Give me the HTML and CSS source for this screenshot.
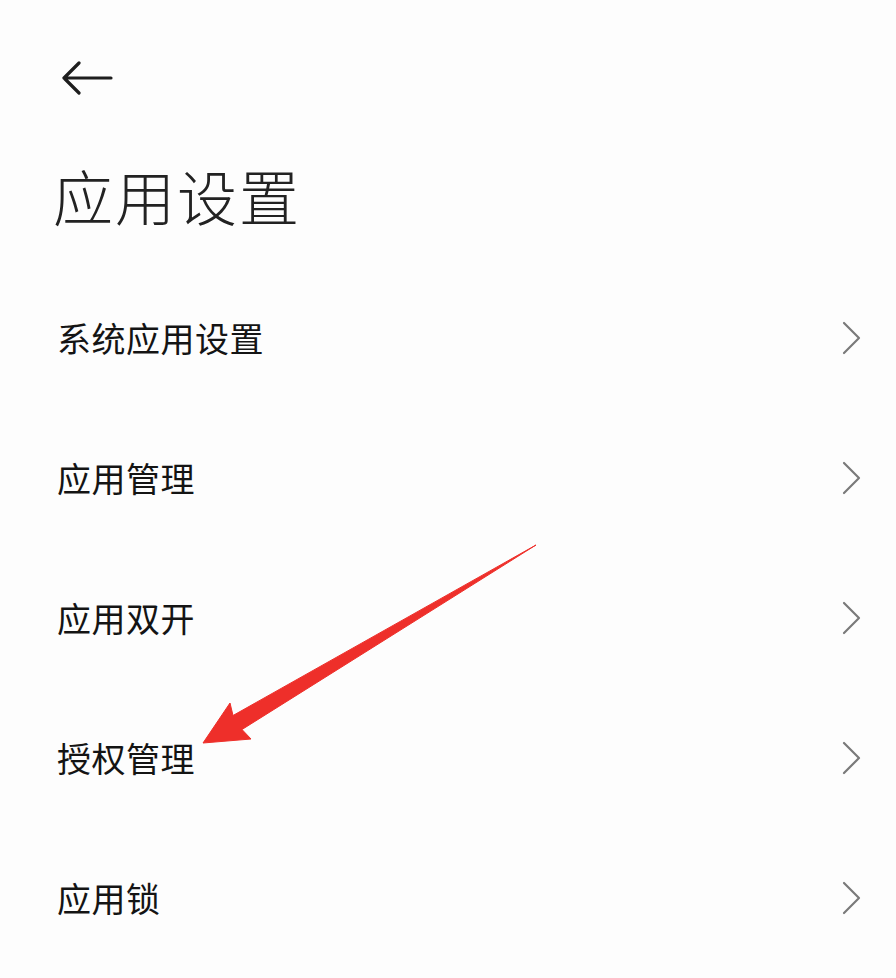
FILE: index.html
```html
<!DOCTYPE html>
<html lang="zh-CN">
<head>
<meta charset="utf-8">
<title>应用设置</title>
<link rel="stylesheet" href="styles.css">
</head>
<body>
<div class="page">
  <header class="topbar">
    <svg class="back" width="52" height="34" viewBox="0 0 52 34" aria-hidden="true">
      <path d="M50 17 H3 M18 2 L3 17 L18 32" fill="none" stroke="#1e1e1e" stroke-width="3.2" stroke-linecap="round" stroke-linejoin="round"/>
    </svg>
  </header>
  <h1 class="title">应用设置</h1>
  <ul class="list">
    <li class="row"><span class="label">系统应用设置</span><svg class="chev" width="20" height="34" viewBox="0 0 20 34"><path d="M2 2 L17 17 L2 32" fill="none" stroke="#7a7a7a" stroke-width="2.2" stroke-linecap="round" stroke-linejoin="round"/></svg></li>
    <li class="row"><span class="label">应用管理</span><svg class="chev" width="20" height="34" viewBox="0 0 20 34"><path d="M2 2 L17 17 L2 32" fill="none" stroke="#7a7a7a" stroke-width="2.2" stroke-linecap="round" stroke-linejoin="round"/></svg></li>
    <li class="row"><span class="label">应用双开</span><svg class="chev" width="20" height="34" viewBox="0 0 20 34"><path d="M2 2 L17 17 L2 32" fill="none" stroke="#7a7a7a" stroke-width="2.2" stroke-linecap="round" stroke-linejoin="round"/></svg></li>
    <li class="row"><span class="label">授权管理</span><svg class="chev" width="20" height="34" viewBox="0 0 20 34"><path d="M2 2 L17 17 L2 32" fill="none" stroke="#7a7a7a" stroke-width="2.2" stroke-linecap="round" stroke-linejoin="round"/></svg></li>
    <li class="row"><span class="label">应用锁</span><svg class="chev" width="20" height="34" viewBox="0 0 20 34"><path d="M2 2 L17 17 L2 32" fill="none" stroke="#7a7a7a" stroke-width="2.2" stroke-linecap="round" stroke-linejoin="round"/></svg></li>
  </ul>
  <svg class="annot" width="896" height="978" viewBox="0 0 896 978" aria-hidden="true">
    <polygon points="203,743 230,703 233,715.5 536,545 242,729.5 251,739" fill="#ee2f2a" stroke="#ee2f2a" stroke-width="1" stroke-linejoin="round"/>
  </svg>
</div>
</body>
</html>
```

FILE: styles.css
```css
html, body {
  margin: 0;
  padding: 0;
  background: #fdfdfd;
}

.page {
  position: relative;
  width: 896px;
  height: 978px;
  overflow: hidden;
  font-family: "Noto Sans CJK SC", "Noto Sans", sans-serif;
  color: #141414;
}

.topbar {
  height: 156px;
  display: flex;
  align-items: center;
  padding-left: 61px;
}

.back {
  display: block;
}

.title {
  margin: -4px 0 30px 0;
  padding-left: 53px;
  height: 86px;
  line-height: 86px;
  font-size: 60px;
  font-weight: 300;
  color: #222;
  letter-spacing: 2px;
}

.list {
  list-style: none;
  margin: 0;
  padding: 0;
}

.row {
  height: 140px;
  display: flex;
  align-items: center;
  justify-content: space-between;
  padding: 0 34px 0 57px;
}

.label {
  font-size: 34px;
  line-height: 40px;
  font-weight: 400;
  letter-spacing: 0.5px;
}

.chev {
  display: block;
}

.annot {
  position: absolute;
  left: 0;
  top: 0;
  pointer-events: none;
}
```
